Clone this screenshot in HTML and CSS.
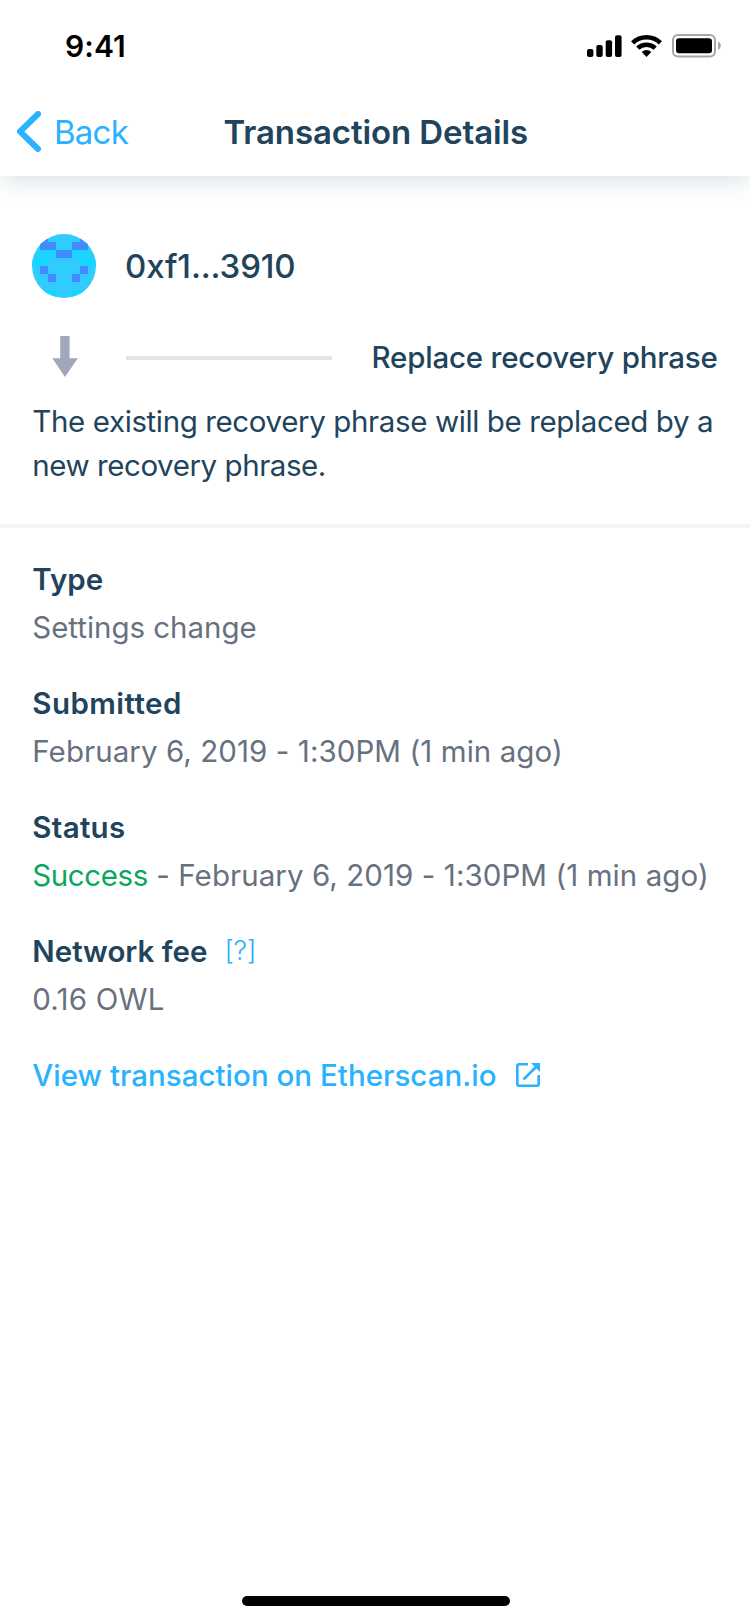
FILE: index.html
```html
<!DOCTYPE html>
<html lang="en">
<head>
<meta charset="utf-8">
<title>Transaction Details</title>
<link rel="stylesheet" href="styles.css">
</head>
<body>
<div class="screen">
  <header class="header">
    <div class="status-bar">
      <span class="time">9:41</span>
      <svg class="status-icons" width="136" height="26" viewBox="0 0 136 26">
        <rect x="0" y="15" width="6.4" height="8" rx="2"/>
        <rect x="9.3" y="11" width="6.4" height="12" rx="2"/>
        <rect x="18.7" y="6.3" width="6.4" height="16.7" rx="2"/>
        <rect x="28" y="1.3" width="6.6" height="21.7" rx="2"/>
        <g fill="none" stroke="#000" stroke-width="4.5">
          <path d="M45.6 8.9a20 20 0 0 1 27.8 0"/>
          <path d="M50.8 14.2a12.4 12.4 0 0 1 17.4 0"/>
        </g>
        <path d="M54.7 18a6.8 6.8 0 0 1 9.6 0l-4.8 4.9z"/>
        <rect x="86" y="1" width="42" height="21.6" rx="5" fill="none" stroke="#a6a6a6" stroke-width="2"/>
        <rect x="89" y="4.3" width="36" height="15" rx="3"/>
        <path d="M131 7.5q2.8 1.2 2.8 4.3t-2.8 4.3z" fill="#a6a6a6"/>
      </svg>
    </div>
    <nav class="nav">
      <a class="back">
        <svg width="24" height="42" viewBox="0 0 24 42"><path d="M21 3L3 20.5L21 38" fill="none" stroke="#29b2ff" stroke-width="6" stroke-linecap="round" stroke-linejoin="miter"/></svg>
        <span class="back-label">Back</span>
      </a>
      <h1 class="title">Transaction Details</h1>
    </nav>
  </header>

  <section class="summary">
    <div class="account">
      <svg class="avatar" width="64" height="64" viewBox="0 0 8 8" shape-rendering="crispEdges">
        <rect width="8" height="8" fill="#31cbff"/>
        <path fill="#16d5ff" d="M1 2h2v1h-2zM5 2h2v1h-2zM0 3h2v1h-2zM6 3h2v1h-2zM0 7h3v1h-3zM5 7h3v1h-3z"/>
        <path fill="#428bff" d="M1 0h1v1h1v1h-2zM6 0h1v2h-2v-1h1zM3 2h2v1h-2zM1 4h1v1h-1zM6 4h1v1h-1zM2 5h1v1h-1zM5 5h1v1h-1z"/>
      </svg>
      <span class="address">0xf1...3910</span>
    </div>
    <div class="action">
      <svg class="arrow" width="26" height="42" viewBox="0 0 26 42"><path d="M8.2 0h9.4v22.3h8.2L13 41L.3 22.3h7.9z" fill="#a2a8ba"/></svg>
      <span class="rule"></span>
      <span class="action-name">Replace recovery phrase</span>
    </div>
    <p class="description"><span class="line">The existing recovery phrase will be replaced by a</span> <span class="line">new recovery phrase.</span></p>
  </section>

  <dl class="details">
    <div class="item"><dt>Type</dt><dd class="kind">Settings change</dd></div>
    <div class="item"><dt class="submitted">Submitted</dt><dd>February 6, 2019 - 1:30PM (1 min ago)</dd></div>
    <div class="item"><dt class="status">Status</dt><dd><span class="success">Success</span> - February 6, 2019 - 1:30PM (1 min ago)</dd></div>
    <div class="item"><dt>Network fee<span class="help">[?]</span></dt><dd class="fee">0.16 OWL</dd></div>
  </dl>
  <a class="explorer">
    <span class="explorer-label">View transaction on Etherscan.io</span>
    <svg width="24" height="24" viewBox="0 0 24 24" fill="none" stroke="#29b2ff">
      <path d="M12 1.3H3Q1.3 1.3 1.3 3V21Q1.3 22.7 3 22.7H21Q22.7 22.7 22.7 21V12" stroke-width="2.6"/>
      <path d="M7.5 16.5L21 3" stroke-width="2.6"/><path d="M15 0H24V9z" fill="#29b2ff" stroke="none"/>
    </svg>
  </a>
  <div class="home-indicator"></div>
</div>
</body>
</html>
```
FILE: styles.css
```css
* { box-sizing: border-box; }
body {
  margin: 0;
  background: #fff;
  color: #21445c;
  font-family: Inter, "Liberation Sans", sans-serif;
  font-size: 29.5px;
}
.screen { display: flex; flex-direction: column; width: 750px; height: 1624px; overflow: hidden; }
.header { height: 176px; box-shadow: 0 8px 20px -2px rgba(40, 84, 107, .16); }
.status-bar { display: flex; justify-content: space-between; height: 88px; padding: 28px 20px 0 65px; }
.time { color: #000; font-size: 30px; font-weight: 600; line-height: 36px; letter-spacing: .1px; }
.status-icons { margin-top: 6px; margin-right: 7px; }
.nav { display: grid; grid-template-columns: 223.5px 1fr; height: 88px; align-items: center; line-height: 40px; }
.back { display: flex; align-items: center; gap: 13px; padding-left: 17px; color: #29b2ff; font-size: 33px; letter-spacing: -.75px; }
.title { margin: 0; font-size: 33px; font-weight: 600; letter-spacing: -.1px; }
.summary { height: 352px; padding: 58px 32px 0; border-bottom: 4px solid #f3f4f9; }
.account { display: flex; align-items: center; gap: 29px; height: 64px; }
.avatar { border-radius: 50%; }
.address { font-size: 33px; font-weight: 500; letter-spacing: -.15px; }
.action { display: flex; align-items: center; height: 42px; margin-top: 38px; padding-left: 20px; }
.arrow { flex: none; }
.rule { flex: none; width: 206px; height: 4px; margin-left: 48px; margin-top: 2px; background: #e3e4e9; }
.action-name { margin-left: 39.5px; font-weight: 500; letter-spacing: -.2px; white-space: nowrap; }
.description { margin: 21px 0 0 .3px; line-height: 44px; letter-spacing: -.38px; }
.line { display: block; white-space: nowrap; }
.line + .line { letter-spacing: -.44px; }
.details { display: flex; flex-direction: column; gap: 28px; margin: 27px 32px 0 32.3px; line-height: 48px; white-space: nowrap; }
dt { height: 48px; font-weight: 600; }
.submitted { letter-spacing: .45px; }
.status { letter-spacing: .3px; }
dd { height: 48px; margin: 0; color: #67717f; letter-spacing: .07px; }
.kind { letter-spacing: -.03px; }
.success { color: #0ba65f; letter-spacing: -.4px; }
.fee { letter-spacing: .2px; }
.help { margin-left: 17px; color: #29b2ff; font-size: 27px; font-weight: 300; letter-spacing: -.2px; line-height: 1; vertical-align: 2px; }
.explorer { display: flex; align-items: center; gap: 19px; height: 48px; margin: 28px 32px 0 32.3px; color: #29b2ff; font-weight: 500; letter-spacing: .02px; white-space: nowrap; }
.home-indicator { align-self: center; width: 268px; height: 10px; margin: auto 0 18px 2px; border-radius: 5px; background: #000; }
```
